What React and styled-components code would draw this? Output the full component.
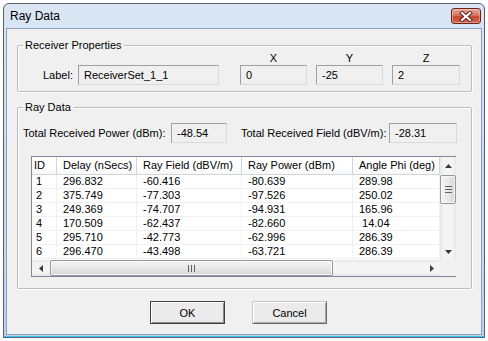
import React from 'react';
import styled, { createGlobalStyle } from 'styled-components';

const GlobalStyle = createGlobalStyle`
  html, body {
    margin: 0;
    padding: 0;
    background: #fff;
  }
  body {
    font-family: "Liberation Sans", Arial, sans-serif;
    font-size: 11px;
    color: #000;
  }
  * {
    box-sizing: border-box;
  }
`;

const Window = styled.div`
  margin: 3px 0 0 3px;
  width: 482px;
  height: 335px;
  display: flex;
  flex-direction: column;
  padding: 0 2px 2px;
  border: 1px solid #55606c;
  border-radius: 6px 6px 0 0;
  background: linear-gradient(180deg, #dae6f3 0%, #c9dbef 45%, #bfd4ec 100%);
  box-shadow: inset 0 -1px 0 #3fc4ef;
`;

const TitleBar = styled.div`
  height: 24px;
  display: flex;
  align-items: center;
  justify-content: space-between;
  padding: 0 1px 0 4px;
`;

const Title = styled.span`
  font-size: 12px;
  color: #000;
`;

const CloseButton = styled.div`
  width: 30px;
  height: 16px;
  border: 1px solid #6b2418;
  border-radius: 3px;
  background: linear-gradient(180deg, #e9a99a 0%, #d87563 45%, #c6452e 55%, #d06a52 100%);
  box-shadow: inset 0 0 0 1px rgba(255, 220, 210, 0.45);
  display: flex;
  align-items: center;
  justify-content: center;
`;

const Client = styled.div`
  flex: 1;
  display: flex;
  flex-direction: column;
  background: #f0f0f0;
  border: 1px solid #8ba3bf;
`;

const Group = styled.fieldset`
  margin: ${({ $top }) => $top}px 9px 0 10px;
  padding: 0;
  height: ${({ $h }) => $h}px;
  min-width: 0;
  border: 1px solid #bdbdbd;
  border-radius: 2px;
  box-shadow: inset 1px 1px 0 #fff, 1px 1px 0 #fff;
`;

const Legend = styled.legend`
  margin-left: 5px;
  padding: 0 2px;
  line-height: 12px;
  font-size: 11px;
`;

const PropsRow = styled.div`
  display: flex;
  align-items: flex-end;
  padding: 1px 0 0 25px;
`;

const FieldLabel = styled.span`
  width: ${({ $w }) => $w}px;
  margin-left: ${({ $ml }) => $ml || 0}px;
  flex: none;
  line-height: 20px;
`;

const Field = styled.div`
  width: ${({ $w }) => $w}px;
  height: 20px;
  flex: none;
  padding-left: 5px;
  line-height: 18px;
  background: #f0f0f0;
  border: 1px solid;
  border-color: #a0a0a0 #dadada #dadada #a0a0a0;
`;

const Coords = styled.div`
  display: flex;
  gap: 9px;
  margin-left: 21px;
`;

const Coord = styled.div`
  display: flex;
  flex-direction: column;
  align-items: center;
`;

const CoordHead = styled.div`
  height: 13px;
  line-height: 13px;
`;

const TotalsRow = styled.div`
  display: flex;
  align-items: center;
  padding: 10px 0 0 5px;
`;

const ListView = styled.div`
  margin: 13px 0 0 13px;
  width: 425px;
  height: 121px;
  border: 1px solid #828790;
  background: #fff;
  display: grid;
  grid-template-columns: 408px 16px;
  grid-template-rows: 103px 16px;
`;

const TableArea = styled.div`
  overflow: hidden;
`;

const HeaderRow = styled.div`
  display: flex;
  height: 18px;
  border-bottom: 1px solid #d5d5d5;
  background: linear-gradient(180deg, #ffffff 0%, #ffffff 50%, #f7f8fa 100%);
`;

const HeaderCell = styled.div`
  width: ${({ $w }) => $w}px;
  flex: none;
  padding-left: ${({ $pad }) => $pad}px;
  line-height: 17px;
  border-right: 1px solid #d5d5d5;
  white-space: nowrap;
  overflow: hidden;
`;

const DataRow = styled.div`
  display: flex;
  height: 14px;
  border-bottom: 1px solid #f0f0f0;
`;

const DataCell = styled.div`
  width: ${({ $w }) => $w}px;
  flex: none;
  padding-left: ${({ $pad }) => $pad}px;
  line-height: 13px;
  border-right: 1px solid #f0f0f0;
  white-space: pre;
  overflow: hidden;
`;

const VScroll = styled.div`
  display: flex;
  flex-direction: column;
  background: linear-gradient(90deg, #e6e6e6 0%, #f4f4f4 20%, #f4f4f4 80%, #e6e6e6 100%);
`;

const HScroll = styled.div`
  display: flex;
  align-items: center;
  background: linear-gradient(180deg, #e6e6e6 0%, #f4f4f4 20%, #f4f4f4 80%, #e6e6e6 100%);
`;

const Corner = styled.div`
  background: #f0f0f0;
`;

const ArrowBox = styled.div`
  flex: none;
  width: ${({ $w }) => $w}px;
  height: ${({ $h }) => $h}px;
  display: flex;
  align-items: center;
  justify-content: center;
`;

const VThumb = styled.div`
  margin: 1px 0 0 0;
  width: 16px;
  height: 29px;
  border: 1px solid #989898;
  border-radius: 2px;
  background: linear-gradient(90deg, #f4f4f4 0%, #e8e8e8 50%, #d6d6d6 100%);
  box-shadow: inset 0 0 0 1px rgba(255, 255, 255, 0.7);
  display: flex;
  align-items: center;
  justify-content: center;
`;

const HThumb = styled.div`
  margin-left: 1px;
  width: 283px;
  height: 16px;
  border: 1px solid #989898;
  border-radius: 2px;
  background: linear-gradient(180deg, #f4f4f4 0%, #e8e8e8 50%, #d6d6d6 100%);
  box-shadow: inset 0 0 0 1px rgba(255, 255, 255, 0.7);
  display: flex;
  align-items: center;
  justify-content: center;
`;

const Spacer = styled.div`
  flex: 1;
`;

const Buttons = styled.div`
  display: flex;
  gap: 27px;
  padding: 12px 0 0 143px;
`;

const Button = styled.div`
  width: 75px;
  height: 23px;
  display: flex;
  align-items: center;
  justify-content: center;
  background: #ebebeb;
  border: 1px solid;
  border-color: ${({ $default }) =>
    $default ? '#404040' : '#c8c8c8 #6a6a6a #6a6a6a #c8c8c8'};
  box-shadow: ${({ $default }) =>
    $default
      ? 'inset 1px 1px 0 #fff, inset -1px -1px 0 #8a8a8a'
      : 'inset 1px 1px 0 #fff, inset -1px -1px 0 #a8a8a8'};
`;

const columns = [
  { title: 'ID', w: 25, hp: 2, dp: 4 },
  { title: 'Delay (nSecs)', w: 80, hp: 6, dp: 6 },
  { title: 'Ray Field (dBV/m)', w: 105, hp: 6, dp: 6 },
  { title: 'Ray Power (dBm)', w: 111, hp: 6, dp: 6 },
  { title: 'Angle Phi (deg)', w: 87, hp: 6, dp: 6 },
];

const rows = [
  ['1', '296.832', '-60.416', '-80.639', '289.98'],
  ['2', '375.749', '-77.303', '-97.526', '250.02'],
  ['3', '249.369', '-74.707', '-94.931', '165.96'],
  ['4', '170.509', '-62.437', '-82.660', ' 14.04'],
  ['5', '295.710', '-42.773', '-62.996', '286.39'],
  ['6', '296.470', '-43.498', '-63.721', '286.39'],
];

const Arrow = ({ dir }) => {
  const pts = {
    up: '0,4 3.5,0 7,4',
    down: '0,0 3.5,4 7,0',
    left: '4,0 0,3.5 4,7',
    right: '0,0 4,3.5 0,7',
  }[dir];
  const vertical = dir === 'up' || dir === 'down';
  return (
    <svg width={vertical ? 7 : 4} height={vertical ? 4 : 7}>
      <polygon points={pts} fill="#3a3a3a" />
    </svg>
  );
};

const Grip = ({ vertical }) =>
  vertical ? (
    <svg width="7" height="7">
      <path d="M0 0.5H7M0 3.5H7M0 6.5H7" stroke="#606060" />
    </svg>
  ) : (
    <svg width="7" height="7">
      <path d="M0.5 0V7M3.5 0V7M6.5 0V7" stroke="#606060" />
    </svg>
  );

const App = () => (
  <>
    <GlobalStyle />
    <Window>
      <TitleBar>
        <Title>Ray Data</Title>
        <CloseButton>
          <svg width="14" height="11" viewBox="0 0 14 11">
            <path d="M3 2L11 9M11 2L3 9" stroke="#5a1b12" strokeWidth="4" strokeLinecap="square" />
            <path d="M3 2L11 9M11 2L3 9" stroke="#fff" strokeWidth="2.2" strokeLinecap="square" />
          </svg>
        </CloseButton>
      </TitleBar>
      <Client>
        <Group $top={10} $h={53}>
          <Legend>Receiver Properties</Legend>
          <PropsRow>
            <FieldLabel $w={35}>Label:</FieldLabel>
            <Field $w={141}>ReceiverSet_1_1</Field>
            <Coords>
              <Coord>
                <CoordHead>X</CoordHead>
                <Field $w={67}>0</Field>
              </Coord>
              <Coord>
                <CoordHead>Y</CoordHead>
                <Field $w={67}>-25</Field>
              </Coord>
              <Coord>
                <CoordHead>Z</CoordHead>
                <Field $w={68}>2</Field>
              </Coord>
            </Coords>
          </PropsRow>
        </Group>
        <Group $top={9} $h={188}>
          <Legend>Ray Data</Legend>
          <TotalsRow>
            <FieldLabel $w={148}>Total Received Power (dBm):</FieldLabel>
            <Field $w={56}>-48.54</Field>
            <FieldLabel $w={148} $ml={14}>
              Total Received Field (dBV/m):
            </FieldLabel>
            <Field $w={68}>-28.31</Field>
          </TotalsRow>
          <ListView>
            <TableArea>
              <HeaderRow>
                {columns.map((c) => (
                  <HeaderCell key={c.title} $w={c.w} $pad={c.hp}>
                    {c.title}
                  </HeaderCell>
                ))}
              </HeaderRow>
              {rows.map((r) => (
                <DataRow key={r[0]}>
                  {r.map((v, i) => (
                    <DataCell key={i} $w={columns[i].w} $pad={columns[i].dp}>
                      {v}
                    </DataCell>
                  ))}
                </DataRow>
              ))}
            </TableArea>
            <VScroll>
              <ArrowBox $w={16} $h={17}>
                <Arrow dir="up" />
              </ArrowBox>
              <VThumb>
                <Grip vertical />
              </VThumb>
              <Spacer />
              <ArrowBox $w={16} $h={17}>
                <Arrow dir="down" />
              </ArrowBox>
            </VScroll>
            <HScroll>
              <ArrowBox $w={17} $h={16}>
                <Arrow dir="left" />
              </ArrowBox>
              <HThumb>
                <Grip />
              </HThumb>
              <Spacer />
              <ArrowBox $w={17} $h={16}>
                <Arrow dir="right" />
              </ArrowBox>
            </HScroll>
            <Corner />
          </ListView>
        </Group>
        <Buttons>
          <Button $default>OK</Button>
          <Button>Cancel</Button>
        </Buttons>
      </Client>
    </Window>
  </>
);

export default App;
